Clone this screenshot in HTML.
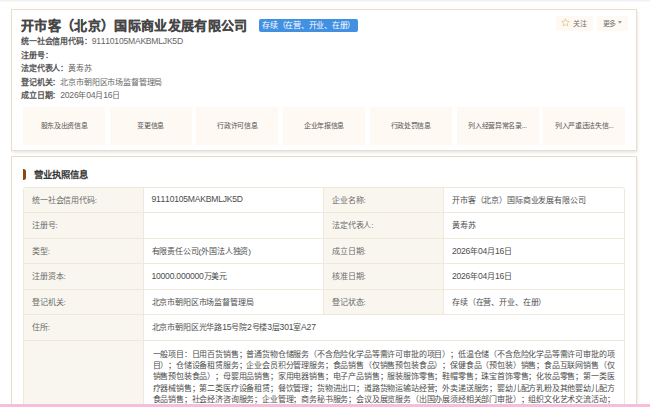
<!DOCTYPE html>
<html lang="zh-CN"><head><meta charset="utf-8">
<style>
html,body{margin:0;padding:0;}
body{text-spacing-trim:space-all;font-kerning:none;width:650px;height:407px;overflow:hidden;position:relative;background:#fff;font-family:"Liberation Sans",sans-serif;color:#333;}
.abs{position:absolute;white-space:nowrap;}
.topstrip{position:absolute;left:0;top:0;width:650px;height:2.2px;background:linear-gradient(#f1f1f1 40%,#fff);}
.card{position:absolute;left:11px;width:624px;border:1px solid #eadec6;background:#fff;box-shadow:0.5px 1.5px 3px rgba(0,0,0,0.11);}
#c1{top:9px;height:139.6px;}
#c2{top:156px;height:300px;}
.title{left:21px;top:16.2px;font-size:13px;letter-spacing:0.34px;font-weight:bold;line-height:20px;color:#464646;-webkit-text-stroke:0.2px #464646;}
.badge{left:259px;top:18.6px;width:99.4px;height:13px;background:#4290e2;color:#fff;font-size:8px;letter-spacing:-0.25px;line-height:13px;border-radius:2px;}
.badge span{position:absolute;left:3px;top:0;}
.btn{top:15.5px;height:15.2px;background:#fefaf3;font-size:7px;letter-spacing:-0.3px;line-height:15.6px;color:#707070;}
.info{left:21px;font-size:8px;letter-spacing:-0.15px;line-height:13.5px;color:#666;}
.info b{color:#555;}
.tab{top:106.5px;width:82px;height:38px;background:#fef9f2;font-size:7px;letter-spacing:-0.33px;line-height:38px;text-align:center;color:#555;}
.sect{left:34px;top:169px;font-size:9.33px;font-weight:bold;line-height:12px;color:#333;}
.bar{left:23px;top:169px;width:3px;height:10.7px;background:#8b4a0c;border-radius:1px;}
.tw{position:absolute;left:23px;top:187px;width:600px;height:230px;border:1px solid #f0e8d8;border-radius:3px;overflow:hidden;}
table{width:600px;border-collapse:collapse;border-style:hidden;table-layout:fixed;font-size:8px;letter-spacing:-0.15px;}
td{border:1px solid #f0e8d8;height:23.05px;padding:0 0 1.5px 8px;white-space:nowrap;}
td.scope{line-height:11.35px;padding:7.8px 0 0 9px;vertical-align:top;height:120px;letter-spacing:-0.17px;}
td.l{background:#f9f6ef;color:#6a6a6a;}
td.v{color:#4d4d4d;}
.pink{position:absolute;left:0;top:404px;width:650px;height:3px;background:#f8bddb;}
i.n{font-style:normal;font-size:8.6px;letter-spacing:-0.24px;}
tr:first-child td{height:22.5px;}
</style></head><body>
<div class="topstrip"></div>
<div class="card" id="c1"></div>
<div class="abs title">开市客（北京）国际商业发展有限公司</div>
<div class="abs badge"><span>存续（在营、开业、在册）</span></div>
<div class="abs btn" style="left:556px;width:37px;"><svg style="position:absolute;left:4.8px;top:2.8px" width="9" height="9" viewBox="0 0 24 24"><path d="M12 2.2l2.95 6.3 6.85.85-5.05 4.75 1.3 6.8L12 17.55 5.95 20.9l1.3-6.8L2.2 9.35l6.85-.85z" fill="none" stroke="#d8b064" stroke-width="1.5" stroke-linejoin="round"/></svg><span style="position:absolute;left:17.3px">关注</span></div>
<div class="abs btn" style="left:597px;width:31px;"><span style="position:absolute;left:5.5px">更多</span><svg style="position:absolute;left:21.3px;top:5.6px" width="3.8" height="2.8" viewBox="0 0 3.8 2.8"><path d="M0 0H3.8L1.9 2.8z" fill="#999"/></svg></div>
<div class="abs info" style="top:35.1px"><b>统一社会信用代码：</b><i class="n">91110105MAKBMLJK5D</i></div>
<div class="abs info" style="top:48.6px"><b>注册号：</b></div>
<div class="abs info" style="top:62.1px"><b>法定代表人：</b>黄寿苏</div>
<div class="abs info" style="top:75.6px"><b>登记机关：</b>北京市朝阳区市场监督管理局</div>
<div class="abs info" style="top:89.1px"><b>成立日期：</b><i class="n">2026</i>年<i class="n">04</i>月<i class="n">16</i>日</div>
<div class="abs tab" style="left:23px">股东及出资信息</div>
<div class="abs tab" style="left:109.7px">变更信息</div>
<div class="abs tab" style="left:196.4px">行政许可信息</div>
<div class="abs tab" style="left:283.1px">企业年报信息</div>
<div class="abs tab" style="left:369.8px">行政处罚信息</div>
<div class="abs tab" style="left:456.5px">列入经营异常名录...</div>
<div class="abs tab" style="left:543.2px">列入严重违法失信...</div>

<div class="card" id="c2"></div>
<svg class="abs" style="left:22.7px;top:168.9px" width="3.3" height="10.9" viewBox="0 0 3.3 10.9"><path d="M0 0H1.2Q3.3 1 3.3 2.6V8.3Q3.3 9.9 1.2 10.9H0Z" fill="#8b4a0c"/></svg>
<div class="abs sect">营业执照信息</div>
<div class="tw"><table>
<colgroup><col style="width:119px"><col style="width:180.5px"><col style="width:120px"><col style="width:180.5px"></colgroup>
<tr><td class="l">统一社会信用代码:</td><td class="v"><i class="n">91110105MAKBMLJK5D</i></td><td class="l">企业名称:</td><td class="v">开市客（北京）国际商业发展有限公司</td></tr>
<tr><td class="l">注册号:</td><td class="v"></td><td class="l">法定代表人:</td><td class="v">黄寿苏</td></tr>
<tr><td class="l">类型:</td><td class="v">有限责任公司(外国法人独资)</td><td class="l">成立日期:</td><td class="v"><i class="n">2026</i>年<i class="n">04</i>月<i class="n">16</i>日</td></tr>
<tr><td class="l">注册资本:</td><td class="v"><i class="n">10000.000000</i>万美元</td><td class="l">核准日期:</td><td class="v"><i class="n">2026</i>年<i class="n">04</i>月<i class="n">16</i>日</td></tr>
<tr><td class="l">登记机关:</td><td class="v">北京市朝阳区市场监督管理局</td><td class="l">登记状态:</td><td class="v">存续（在营、开业、在册）</td></tr>
<tr><td class="l">住所:</td><td class="v" colspan="3">北京市朝阳区光华路<i class="n">15</i>号院<i class="n">2</i>号楼<i class="n">3</i>层<i class="n">301</i>室<i class="n">A27</i></td></tr>
<tr><td class="l"></td><td class="v scope" colspan="3">一般项目：日用百货销售；普通货物仓储服务（不含危险化学品等需许可审批的项目）；低温仓储（不含危险化学品等需许可审批的项<br>目）；仓储设备租赁服务；企业会员积分管理服务；食品销售（仅销售预包装食品）；保健食品（预包装）销售；食品互联网销售（仅<br>销售预包装食品）；母婴用品销售；家用电器销售；电子产品销售；服装服饰零售；鞋帽零售；珠宝首饰零售；化妆品零售；第一类医<br>疗器械销售；第二类医疗设备租赁；餐饮管理；货物进出口；道路货物运输站经营；外卖递送服务；婴幼儿配方乳粉及其他婴幼儿配方<br>食品销售；社会经济咨询服务；企业管理；商务秘书服务；会议及展览服务（出国办展须经相关部门审批）；组织文化艺术交流活动；<br>仓储设备租赁服务（不含危险化学品）；互联网销售（除销售需要许可的商品）；</td></tr>
</table></div>
<div class="pink"></div>
</body></html>
